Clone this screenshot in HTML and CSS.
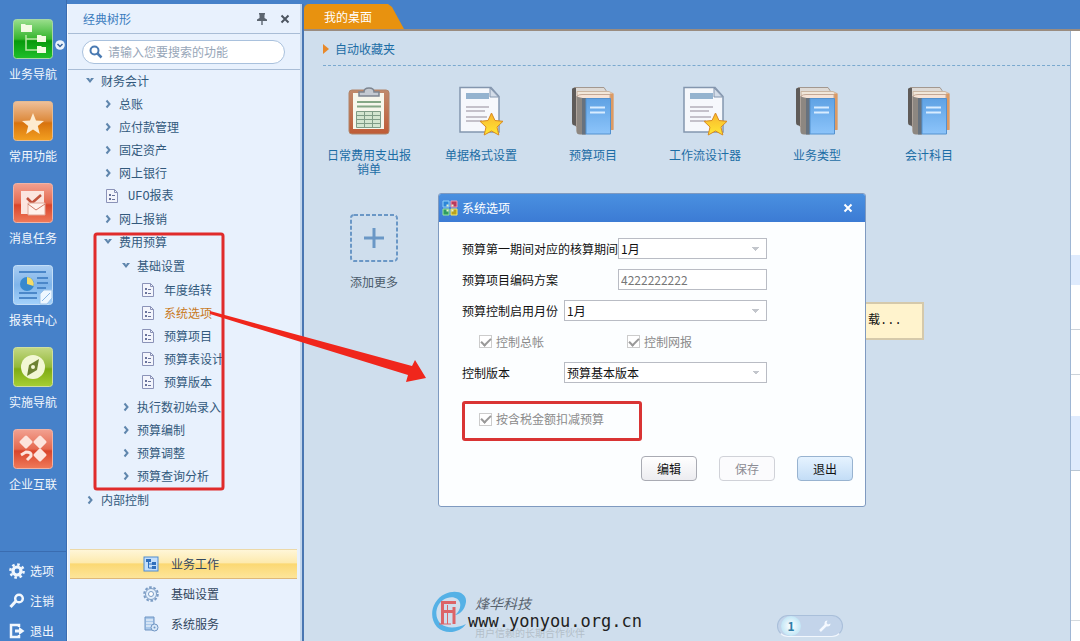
FILE: index.html
```html
<!DOCTYPE html>
<html lang="zh-CN">
<head>
    <meta charset="UTF-8">
    <meta name="viewport" content="width=device-width, initial-scale=1.0">
    <title>我的桌面</title>
    <link rel="stylesheet" href="styles.css">
</head>
<body>
<!-- Shared icons -->
<svg class="defs" aria-hidden="true">
    <defs>
        <linearGradient id="g-green" x1="0" y1="0" x2="0" y2="1"><stop offset="0" stop-color="#9ade8c"/><stop offset=".5" stop-color="#35b52d"/><stop offset=".55" stop-color="#089a0c"/><stop offset="1" stop-color="#1fc02a"/></linearGradient>
        <linearGradient id="g-orange" x1="0" y1="0" x2="0" y2="1"><stop offset="0" stop-color="#efc09a"/><stop offset=".5" stop-color="#dd8a3c"/><stop offset=".55" stop-color="#d8730e"/><stop offset="1" stop-color="#f3a020"/></linearGradient>
        <linearGradient id="g-red" x1="0" y1="0" x2="0" y2="1"><stop offset="0" stop-color="#f2a191"/><stop offset=".5" stop-color="#e5694f"/><stop offset=".55" stop-color="#d9452b"/><stop offset="1" stop-color="#f07a5a"/></linearGradient>
        <linearGradient id="g-blue" x1="0" y1="0" x2="0" y2="1"><stop offset="0" stop-color="#a9cdf2"/><stop offset=".5" stop-color="#7fb4ea"/><stop offset="1" stop-color="#a4d2fb"/></linearGradient>
        <linearGradient id="g-lime" x1="0" y1="0" x2="0" y2="1"><stop offset="0" stop-color="#c3d884"/><stop offset=".5" stop-color="#94b93a"/><stop offset=".55" stop-color="#7fab14"/><stop offset="1" stop-color="#a6cf34"/></linearGradient>
        <linearGradient id="g-book" x1="0" y1="0" x2="0" y2="1"><stop offset="0" stop-color="#5fa2e4"/><stop offset="1" stop-color="#8cc4fa"/></linearGradient>
        <linearGradient id="g-star" x1="0" y1="0" x2="0" y2="1"><stop offset="0" stop-color="#f9b52c"/><stop offset="1" stop-color="#ffe834"/></linearGradient>
        <linearGradient id="g-clip" x1="0" y1="0" x2="0" y2="1"><stop offset="0" stop-color="#c08a6c"/><stop offset="1" stop-color="#bf5b36"/></linearGradient>
    </defs>
    <symbol id="i-leaf" viewBox="0 0 12 14">
        <path d="M.5.5h8l3 3v10H.5z" fill="#f3f5fc" stroke="#8b93b8"/>
        <path d="M8.500.5v3h3" fill="none" stroke="#8b93b8"/>
        <path d="M3 5h2v2H3zM3 9h2v2H3z" fill="#6a749c"/>
        <path d="M6 6.500h3M6 10.500h3" stroke="#6a749c"/>
    </symbol>
    <symbol id="i-down" viewBox="0 0 10 10"><path d="M1 2h3l1 2 1-2h3L5 7z" fill="#5f86ad"/></symbol>
    <symbol id="i-right" viewBox="0 0 10 10"><path d="M3.500 1.500 6.500 5 3.500 8.500" fill="none" stroke="#5f86ad" stroke-width="2"/></symbol>
    <symbol id="i-gear" viewBox="0 0 16 16">
        <circle cx="8" cy="8" r="6.600" fill="none" stroke="currentColor" stroke-width="2.500" stroke-dasharray="2.600 2.580"/>
        <circle cx="8" cy="8" r="4" fill="none" stroke="currentColor" stroke-width="3.200"/>
    </symbol>
    <symbol id="i-books" viewBox="0 0 44 50">
        <path d="M3.500 1.500H33l2 3v36H5z" fill="#dedad6" stroke="#a39890"/>
        <path d="M1 3q1-2 4-1v38l-3-1q-1 0-1-3z" fill="#5f5b59"/>
        <path d="M6 5.500h32l4 2v36H8z" fill="#f1e7da" stroke="#cbb6a2"/>
        <path d="M39 7.500h3.500V44H39z" fill="#dd9a63"/>
        <path d="M6 10q2-1.500 5-1.500h28V47.500H9q-3 0-3-3z" fill="#f6e3d6" stroke="#c3a896"/>
        <path d="M5.500 10q3 2 9 2v36.500H9q-3.500 0-3.500-3z" fill="#8d8781"/>
        <path d="M11 12h4v36.500h-4z" fill="#67727e"/>
        <path d="M15 12.500h24.500v35.500H15z" fill="url(#g-book)" stroke="#5391cf"/>
        <path d="M19 21.500h15M19 26.500h15" stroke="#d8ecff" stroke-width="2"/>
    </symbol>
    <symbol id="i-doc" viewBox="0 0 44 50">
        <path d="M1 1.500h31l8 9V46H1z" fill="#f6f8fc" stroke="#8496ae" stroke-width="1.500"/>
        <path d="M31 2v9h8.500z" fill="#d4dde9" stroke="#8496ae"/>
        <path d="M7 7h23v6H7z" fill="#94b3cf"/>
        <path d="M7 21h23M7 25h19M7 31h21M7 35h16" stroke="#b4afb9" stroke-width="1.500"/>
        <path d="m32.500 27 3.500 7.500 8 .8-6 5.700 1.800 8-7.300-4-7.300 4 1.800-8-6-5.700 8-.8z" fill="url(#g-star)" stroke="#d88a22"/>
    </symbol>
</svg>

<div class="app">
    <!-- Left icon rail -->
    <aside class="rail">
        <nav class="rail-nav">
            <a href="#" class="rail-item">
                <svg width="40" height="40" viewBox="0 0 40 40">
                    <rect x=".5" y=".5" width="39" height="39" rx="3" fill="url(#g-green)" stroke="#a6d8a6"/>
                    <path d="M8 5h4l1 1h6v7H8z" fill="#f3fbe2"/>
                    <path d="M13 16v15h11M13 20h11" fill="none" stroke="#b8e6a4" stroke-width="1.500"/>
                    <path d="M24 16h4l1 1h4v6h-9zM24 27h4l1 1h4v6h-9z" fill="#f3fbe2"/>
                </svg>
                <span>业务导航</span>
                <svg class="rail-badge" width="10" height="10" viewBox="0 0 10 10">
                    <circle cx="5" cy="5" r="4.800" fill="#eaf3fd"/>
                    <path d="M2.500 4 5 6.500 7.500 4" fill="none" stroke="#35629c" stroke-width="1.500"/>
                </svg>
            </a>
            <a href="#" class="rail-item">
                <svg width="40" height="40" viewBox="0 0 40 40">
                    <rect x=".5" y=".5" width="39" height="39" rx="3" fill="url(#g-orange)" stroke="#e3bb93"/>
                    <path d="m20 12 3 7.500 8 .5-6.200 5 2 8L20 28.500 13.200 33l2-8L9 20l8-.5z" fill="#fdebcf"/>
                </svg>
                <span>常用功能</span>
            </a>
            <a href="#" class="rail-item">
                <svg width="40" height="40" viewBox="0 0 40 40">
                    <rect x=".5" y=".5" width="39" height="39" rx="3" fill="url(#g-red)" stroke="#f0b3a5"/>
                    <path d="M8 8h23v23H8z" fill="#fbe5df"/>
                    <path d="m14 15 5 5 9-8" fill="none" stroke="#c2533c" stroke-width="2.500"/>
                    <path d="M15 20h17v12H15z" fill="#fff2ec" stroke="#e0a898"/>
                    <path d="m15 21 8 6 9-6" fill="none" stroke="#cf7a66"/>
                </svg>
                <span>消息任务</span>
            </a>
            <a href="#" class="rail-item">
                <svg width="40" height="40" viewBox="0 0 40 40">
                    <rect x=".5" y=".5" width="39" height="39" rx="3" fill="url(#g-blue)" stroke="#c3def7"/>
                    <path d="M6 7h27M24 13h11M24 18h11M24 23h9M6 28h18M6 33h18" stroke="#4b87c9" stroke-width="2"/>
                    <circle cx="14" cy="19" r="7" fill="#3789ce"/>
                    <path d="M14 19v-7a7 7 0 0 1 6.500 9z" fill="#f4dc68"/>
                    <path d="M27 39V29l4-4h8v8l-5 6z" fill="#eef7ff" stroke="#9cc3ea"/>
                    <path d="m29 36 8-8" stroke="#8ab7e4"/>
                </svg>
                <span>报表中心</span>
            </a>
            <a href="#" class="rail-item">
                <svg width="40" height="40" viewBox="0 0 40 40">
                    <rect x=".5" y=".5" width="39" height="39" rx="3" fill="url(#g-lime)" stroke="#cfdf9f"/>
                    <circle cx="20" cy="20" r="12" fill="#f2f7d4"/>
                    <path d="m26 12-2 11-10 6 2-11z" fill="#6d8232"/>
                    <circle cx="20" cy="20" r="2" fill="#f2f7d4"/>
                </svg>
                <span>实施导航</span>
            </a>
            <a href="#" class="rail-item">
                <svg width="40" height="40" viewBox="0 0 40 40">
                    <rect x=".5" y=".5" width="39" height="39" rx="3" fill="url(#g-red)" stroke="#f0b3a5"/>
                    <path d="m13 8 5 5-5 5-5-5zM27 8l5 5-5 5-5-5zM27 21l5 5-5 5-5-5z" fill="#fde4dc" stroke="#fde4dc" stroke-width="3" stroke-linejoin="round"/>
                    <path d="m8 26 5-3q6 0 5 4l-4 4" fill="none" stroke="#fde4dc" stroke-width="3"/>
                </svg>
                <span>企业互联</span>
            </a>
        </nav>
        <nav class="rail-foot">
            <a href="#"><svg width="16" height="16"><use href="#i-gear"/></svg>选项</a>
            <a href="#">
                <svg width="16" height="16" viewBox="0 0 16 16"><circle cx="10" cy="5.500" r="3.800" fill="none" stroke="currentColor" stroke-width="2.500"/><path d="m7 8-5.500 6" stroke="currentColor" stroke-width="3"/></svg>注销
            </a>
            <a href="#">
                <svg width="16" height="16" viewBox="0 0 16 16"><path d="M10 4V2H2v12h8v-2" fill="none" stroke="currentColor" stroke-width="2.500"/><path d="M6 6.500h4V4l5.500 4-5.500 4V9.500H6z" fill="currentColor"/></svg>退出
            </a>
        </nav>
    </aside>

    <!-- Function tree -->
    <section class="side">
        <header class="side-head">
            <h2>经典树形</h2>
            <button type="button" aria-label="固定">
                <svg width="12" height="12" viewBox="0 0 12 12"><path d="M3 0h6v1.500H8.500V5L11 6.500V8H1V6.500L3.500 5V1.500H3zM5.300 8h1.400v4H5.300z" fill="#5c6570"/></svg>
            </button>
            <button type="button" aria-label="关闭">
                <svg width="10" height="10" viewBox="0 0 10 10"><path d="m1.500 1.500 7 7m0-7-7 7" stroke="#4c5560" stroke-width="2"/></svg>
            </button>
        </header>
        <div class="search">
            <label class="search-box">
                <svg width="14" height="14" viewBox="0 0 14 14"><circle cx="5.500" cy="5.500" r="4" fill="none" stroke="#4a7ab2" stroke-width="2"/><path d="m8.500 8.500 4 4" stroke="#4a7ab2" stroke-width="2.500"/></svg>
                <input type="text" placeholder="请输入您要搜索的功能" aria-label="搜索功能">
            </label>
        </div>
        <ul class="tree">
            <li>
                <a href="#" class="root"><svg><use href="#i-down"/></svg>财务会计</a>
                <ul>
                    <li><a href="#"><svg><use href="#i-right"/></svg>总账</a></li>
                    <li><a href="#"><svg><use href="#i-right"/></svg>应付款管理</a></li>
                    <li><a href="#"><svg><use href="#i-right"/></svg>固定资产</a></li>
                    <li><a href="#"><svg><use href="#i-right"/></svg>网上银行</a></li>
                    <li><a href="#" class="leaf"><svg><use href="#i-leaf"/></svg><span><span class="latin">UFO</span>报表</span></a></li>
                    <li><a href="#"><svg><use href="#i-right"/></svg>网上报销</a></li>
                    <li>
                        <a href="#"><svg><use href="#i-down"/></svg>费用预算</a>
                        <ul class="sub">
                            <li>
                                <a href="#"><svg><use href="#i-down"/></svg>基础设置</a>
                                <ul class="sub">
                                    <li><a href="#" class="leaf"><svg><use href="#i-leaf"/></svg>年度结转</a></li>
                                    <li><a href="#" class="leaf current"><svg><use href="#i-leaf"/></svg>系统选项</a></li>
                                    <li><a href="#" class="leaf"><svg><use href="#i-leaf"/></svg>预算项目</a></li>
                                    <li><a href="#" class="leaf"><svg><use href="#i-leaf"/></svg>预算表设计</a></li>
                                    <li><a href="#" class="leaf"><svg><use href="#i-leaf"/></svg>预算版本</a></li>
                                </ul>
                            </li>
                            <li><a href="#"><svg><use href="#i-right"/></svg>执行数初始录入</a></li>
                            <li><a href="#"><svg><use href="#i-right"/></svg>预算编制</a></li>
                            <li><a href="#"><svg><use href="#i-right"/></svg>预算调整</a></li>
                            <li><a href="#"><svg><use href="#i-right"/></svg>预算查询分析</a></li>
                        </ul>
                    </li>
                </ul>
            </li>
            <li><a href="#" class="root"><svg><use href="#i-right"/></svg>内部控制</a></li>
        </ul>
        <nav class="side-tabs">
            <a href="#" class="active">
                <svg width="16" height="16" viewBox="0 0 16 16"><rect x="1" y="1" width="14" height="14" fill="#c5dffa" stroke="#4e8bd0"/><path d="M3 3h5v3H3zM9 6h4v3H9zM9 10h4v3H9z" fill="#2f6fbd"/><path d="M5.500 6v6H9M5.500 8H9" fill="none" stroke="#2f6fbd"/></svg>业务工作
            </a>
            <a href="#">
                <svg width="16" height="16" viewBox="0 0 16 16"><circle cx="8" cy="8" r="6.800" fill="none" stroke="#7b9cc4" stroke-width="2" stroke-dasharray="2.600 1.680"/><circle cx="8" cy="8" r="5.500" fill="#e3effc" stroke="#7b9cc4"/><circle cx="8" cy="8" r="2.500" fill="#fff" stroke="#7b9cc4"/></svg>基础设置
            </a>
            <a href="#">
                <svg width="16" height="16" viewBox="0 0 16 16"><path d="M2 1h9v13H2z" fill="#a9c8ea" stroke="#6e94c2"/><path d="M3 4h7M3 7h7M3 10h5" stroke="#fff"/><circle cx="11.500" cy="11.500" r="3.500" fill="#d8e8f8" stroke="#6e94c2"/><circle cx="11.500" cy="11.500" r="1" fill="#6e94c2"/></svg>系统服务
            </a>
        </nav>
    </section>
    <div class="splitter"></div>

    <!-- Desktop -->
    <div class="work">
        <div class="tabbar"><a href="#" class="tab">我的桌面</a></div>
        <div class="work-body">
            <main class="desktop">
                <h1>自动收藏夹</h1>
                <div class="shortcuts">
                    <a href="#" class="shortcut">
                        <svg width="44" height="50" viewBox="0 0 44 50">
                            <rect x="2" y="4" width="40" height="44" rx="3" fill="url(#g-clip)" stroke="#b08468"/>
                            <path d="M6 7h31v36H6z" fill="#f7f7ec"/>
                            <path d="M12 10V6h5q0-4 5-4t5 4h5v4z" fill="#c4cad2" stroke="#7d8590" stroke-width="1.500"/>
                            <path d="M10 16h24M10 20.500h24" stroke="#86a886" stroke-width="2"/>
                            <path d="M9.500 25.500h24v16h-24z" fill="#d3e5cf" stroke="#7f9c86"/>
                            <path d="M9 29.500h25M9 33.500h25M9 37.500h25M17.500 25v17M25.500 25v17" stroke="#7f9c86"/>
                        </svg>
                        <span>日常费用支出报销单</span>
                    </a>
                    <a href="#" class="shortcut"><svg width="44" height="50"><use href="#i-doc"/></svg><span>单据格式设置</span></a>
                    <a href="#" class="shortcut"><svg width="44" height="50"><use href="#i-books"/></svg><span>预算项目</span></a>
                    <a href="#" class="shortcut"><svg width="44" height="50"><use href="#i-doc"/></svg><span>工作流设计器</span></a>
                    <a href="#" class="shortcut"><svg width="44" height="50"><use href="#i-books"/></svg><span>业务类型</span></a>
                    <a href="#" class="shortcut"><svg width="44" height="50"><use href="#i-books"/></svg><span>会计科目</span></a>
                    <a href="#" class="shortcut add">
                        <svg width="50" height="50" viewBox="0 0 50 50">
                            <rect x="2" y="2" width="46" height="46" rx="3" fill="none" stroke="#6a97c6" stroke-width="2" stroke-dasharray="4 2"/>
                            <path d="M25 15v20M15 25h20" stroke="#6a97c6" stroke-width="3"/>
                        </svg>
                        <span>添加更多</span>
                    </a>
                </div>
            </main>
            <div class="edge">
                <i class="e-top"></i><i class="e-sel"></i><i class="e-row"></i><i class="e-row"></i><i class="e-gap"></i><i class="e-block"></i><i class="e-rest"></i>
            </div>
        </div>

        <div class="toast">载...</div>

        <section class="dialog" role="dialog" aria-labelledby="dlg-title">
            <header class="dialog-head">
                <svg width="16" height="16" viewBox="0 0 16 16">
                    <path d="M1 1h6v6H1z" fill="#2c86d8" stroke="#8fd0f8"/><path d="M9 1h6v6H9z" fill="#b93a5c" stroke="#f29ab0"/>
                    <path d="M1 9h6v6H1z" fill="#2f9b62" stroke="#9be79a"/><path d="M9 9h6v6H9z" fill="#b9a21f" stroke="#f7ec6a"/>
                    <path d="M4.500 4.500h2v2h-2zM9.500 4.500h2v2h-2zM4.500 9.500h2v2h-2zM9.500 9.500h2v2h-2z" fill="#e6f3d0"/>
                </svg>
                <h2 id="dlg-title">系统选项</h2>
                <button type="button" aria-label="关闭">
                    <svg width="10" height="10" viewBox="0 0 10 10"><path d="m1.500 1.500 7 7m0-7-7 7" stroke="#fff" stroke-width="2"/></svg>
                </button>
            </header>
            <form class="options">
                <div class="field">
                    <label for="period">预算第一期间对应的核算期间</label>
                    <select id="period"><option>1月</option></select>
                </div>
                <div class="field">
                    <label for="code">预算项目编码方案</label>
                    <input type="text" id="code" value="4222222222" readonly>
                </div>
                <div class="field wide">
                    <label for="month">预算控制启用月份</label>
                    <select id="month"><option>1月</option></select>
                </div>
                <div class="checks">
                    <label><input type="checkbox" checked disabled>控制总帐</label>
                    <label><input type="checkbox" checked disabled>控制网报</label>
                </div>
                <div class="field wide">
                    <label for="version">控制版本</label>
                    <select id="version"><option>预算基本版本</option></select>
                </div>
                <div class="checks marked">
                    <label><input type="checkbox" checked disabled>按含税金额扣减预算</label>
                </div>
            </form>
            <footer class="dialog-foot">
                <button type="button">编辑</button>
                <button type="button" disabled>保存</button>
                <button type="button" class="primary">退出</button>
            </footer>
        </section>

        <div class="brand">
            <svg width="38" height="42" viewBox="0 0 38 42">
                <path d="M36 33C30 42 15 44 7 36-2 26 2 9 15 3c11-5 22-1 21 8-1 8-7 13-11 13 4-3 6-8 5-12C29 6 20 4 13 9 5 15 4 27 11 33c6 5 17 4 25 0z" fill="#55b1e6"/>
                <path d="M12.500 33V11.500H26M12.500 20.500H24M24 33V16" fill="none" stroke="#dc6468" stroke-width="3"/>
                <path d="M17.500 14v19M9 33h12" fill="none" stroke="#dc6468" stroke-width="1"/>
            </svg>
            <div class="brand-text">
                <span class="brand-name">烽华科技</span>
                <span class="brand-slogan">用户信赖的长期合作伙伴</span>
                <span class="brand-url">www.yonyou.org.cn</span>
            </div>
        </div>

        <div class="pager">
            <button type="button" class="page">1</button>
            <button type="button" aria-label="设置">
                <svg width="14" height="14" viewBox="0 0 14 14"><path d="m2 12 6-6" stroke="#f5f9ff" stroke-width="2.500"/><path d="M12.500 4.500A3 3 0 1 1 9.500 1.500L8.500 4 10 5.500z" fill="#f5f9ff"/></svg>
            </button>
        </div>
    </div>
</div>

<!-- Guide marks -->
<svg class="guide" width="350" height="270" viewBox="0 0 350 270" aria-hidden="true">
    <rect x="2" y="2" width="128" height="255" rx="2" fill="none" stroke="#e02b2b" stroke-width="3"/>
    <path d="m117 79 202 55 3-6 11 18-20 4 2-7L117 82z" fill="#f0261c"/>
</svg>
</body>
</html>
```
FILE: styles.css
```css
* {
    box-sizing: border-box;
}

body {
    margin: 0;
    font-family: "Noto Sans CJK SC", "Liberation Sans", sans-serif;
    font-size: 12px;
    line-height: 14px;
    color: #111;
    background: #4681c9;
}

a {
    color: inherit;
    text-decoration: none;
}

ul {
    list-style: none;
    margin: 0;
    padding: 0;
}

h1,
h2 {
    margin: 0;
    font-size: 12px;
    font-weight: normal;
}

button,
input,
select {
    font: inherit;
    color: inherit;
}

button {
    padding: 0;
    border: none;
    background: none;
    cursor: pointer;
}

svg {
    display: block;
    flex: none;
}

.defs {
    position: absolute;
    width: 0;
    height: 0;
}

.app {
    display: flex;
    height: 100vh;
    overflow: hidden;
}

/* Icon rail */
.rail {
    width: 67px;
    flex: none;
    padding-top: 19px;
    color: #f2f7fd;
    border-right: 1px solid #3a6cb0;
}

.rail-item {
    position: relative;
    display: flex;
    flex-direction: column;
    align-items: center;
    gap: 8px;
    height: 82px;
}

.rail-badge {
    position: absolute;
    top: 21px;
    right: 1px;
}

.rail-foot {
    margin-top: 40px;
    padding-top: 4px;
    border-top: 1px solid #3a6cb0;
}

.rail-foot a {
    display: flex;
    align-items: center;
    gap: 5px;
    height: 30px;
    padding-left: 9px;
}

/* Tree panel */
.side {
    display: flex;
    flex-direction: column;
    width: 233px;
    flex: none;
    margin-top: 4px;
    background: #e8f1fd;
    border-left: 1px solid #f6faff;
}

.side-head {
    display: flex;
    align-items: center;
    gap: 12px;
    height: 30px;
    padding: 0 10px 0 15px;
    border-bottom: 1px solid #a9bdd6;
}

.side-head h2 {
    flex: 1;
    color: #3b7cbd;
}

.search {
    padding: 6px 15px 5px 14px;
    border-bottom: 1px solid #a9bdd6;
}

.search-box {
    display: flex;
    align-items: center;
    gap: 5px;
    height: 24px;
    padding: 0 6px;
    background: #fff;
    border: 1px solid #a9c1dd;
    border-radius: 12px;
}

.search-box input {
    flex: 1;
    min-width: 0;
    padding: 0;
    border: none;
    outline: none;
    background: none;
}

.search-box input::placeholder {
    color: #97a6b8;
}

.tree {
    flex: 1;
    padding-left: 17px;
    color: #32597c;
}

.tree ul {
    padding-left: 18px;
}

.tree ul.sub {
    padding-top: 1px;
    padding-bottom: 2px;
}

.tree a {
    display: flex;
    align-items: center;
    gap: 6px;
    height: 23px;
    white-space: nowrap;
}

.tree a.root {
    height: 22px;
}

.tree svg {
    width: 10px;
    height: 10px;
}

.tree a.leaf {
    gap: 10px;
    padding-left: 3px;
}

.tree .leaf svg {
    width: 12px;
    height: 14px;
}

.tree .current {
    color: #c87a1e;
}

.latin {
    font-family: "Liberation Mono", monospace;
}

.side-tabs {
    padding: 0 3px 2px 2px;
    color: #32475f;
}

.side-tabs a {
    display: flex;
    align-items: center;
    gap: 12px;
    height: 30px;
    padding-left: 73px;
}

.side-tabs .active {
    background: linear-gradient(#fff6d8, #fdeaae 45%, #fbd873 50%, #fde59a);
    border-top: 1px solid #ecd9a8;
    border-bottom: 1px solid #dfb878;
}

.splitter {
    width: 4px;
    flex: none;
    margin-top: 4px;
    background: #c3d6ec;
    border-right: 2px solid #4a76b2;
}

/* Work area */
.work {
    position: relative;
    display: flex;
    flex-direction: column;
    flex: 1;
    min-width: 0;
    padding-top: 4px;
}

.tabbar {
    border-bottom: 2px solid #9a8c80;
}

.tab {
    display: block;
    width: 100px;
    height: 25px;
    padding-left: 20px;
    line-height: 25px;
    color: #fff;
    background: #e8920f;
    border-radius: 5px 0 0 0;
    clip-path: polygon(0 0, 84% 0, 88% 12%, 100% 100%, 0 100%);
}

.work-body {
    display: flex;
    flex: 1;
}

.desktop {
    flex: 1;
    background: #cfdeed;
}

.desktop h1 {
    display: flex;
    align-items: center;
    gap: 6px;
    height: 35px;
    margin-left: 19px;
    padding-top: 2px;
    color: #1c6da5;
    border-bottom: 1px dashed #7aa9cf;
}

.desktop h1::before {
    content: "";
    border: 5px solid transparent;
    border-left: 6px solid #e8892a;
    border-right: none;
}

.shortcuts {
    display: grid;
    grid-template-columns: repeat(auto-fill, 112px);
    row-gap: 37px;
    padding: 20px 0 0 9px;
}

.shortcut {
    display: flex;
    flex-direction: column;
    align-items: center;
    gap: 12px;
    padding: 0 14px;
    text-align: center;
    color: #1c6da5;
}

.shortcut.add {
    padding: 0 9px 0 19px;
    color: #4a5a6a;
}

/* Window that shows behind the desktop on the right */
.edge {
    display: flex;
    flex-direction: column;
    width: 10px;
    background: #fff;
    border-left: 1px solid #9fb6d4;
}

.e-top {
    height: 224px;
}

.e-sel {
    height: 30px;
    background: #dfebfd;
}

.e-row {
    height: 45px;
    border-bottom: 1px solid #ccd3da;
}

.e-gap {
    height: 41px;
}

.e-block {
    height: 55px;
    background: #dfebfd;
    border-bottom: 1px solid #b9c6d3;
}

.e-rest {
    height: 150px;
    border-bottom: 1px solid #d5dade;
}

.toast {
    position: absolute;
    top: 302px;
    left: 536px;
    width: 84px;
    padding: 10px 0 10px 26px;
    font-family: "Liberation Mono", "Noto Sans CJK SC", monospace;
    background: #fff3cd;
    border: 2px solid #d5c9ab;
}

/* Options dialog */
.dialog {
    position: absolute;
    top: 193px;
    left: 134px;
    width: 428px;
    padding-bottom: 25px;
    background: #fcfeff;
    border: 1px solid #7f9ac0;
    border-radius: 3px;
    overflow: hidden;
}

.dialog-head {
    display: flex;
    align-items: center;
    gap: 4px;
    height: 28px;
    padding: 0 12px 0 3px;
    color: #fff;
    background: linear-gradient(#4a90e0, #3c7bd4);
}

.dialog-head h2 {
    flex: 1;
}

.options {
    display: flex;
    flex-direction: column;
    gap: 10px;
    width: 328px;
    padding: 16px 0 0 23px;
}

.field {
    display: flex;
    align-items: center;
    justify-content: space-between;
    white-space: nowrap;
}

.field select,
.field input {
    width: 149px;
    height: 21px;
    padding: 0 2px;
    line-height: 18px;
    background: #fff;
    border: 1px solid #b9bcc4;
    border-radius: 0;
    outline: none;
}

.field.wide select {
    width: 203px;
}

.field input {
    color: #777;
}

.field select {
    appearance: none;
    background-image: conic-gradient(from -45deg at 50% 100%, #c3c6cc 90deg, transparent 0);
    background-image: linear-gradient(to bottom left, #c3c6cc 50%, transparent 50%), linear-gradient(to bottom right, #c3c6cc 50%, transparent 50%);
    background-size: 4px 4px;
    background-position: right 10px center, right 6px center;
    background-repeat: no-repeat;
}

.checks {
    display: flex;
    height: 21px;
    padding-left: 17px;
    color: #8b8b8b;
}

.checks label {
    display: flex;
    align-items: center;
    gap: 4px;
    width: 148px;
    flex: none;
    white-space: nowrap;
}

.checks input {
    appearance: none;
    display: grid;
    place-items: center;
    width: 13px;
    height: 13px;
    margin: 0;
    background: #fff;
    border: 1px solid #ccc;
}

.checks input:checked::after {
    content: "";
    width: 8px;
    height: 4px;
    margin-bottom: 2px;
    border: solid #999;
    border-width: 0 0 2px 2px;
    transform: rotate(-45deg);
}

.checks.marked {
    width: 180px;
    height: 40px;
    margin-top: 8px;
    padding: 0 0 4px 14px;
    border: 3px solid #d93434;
    border-radius: 3px;
}

.dialog-foot {
    display: flex;
    justify-content: flex-end;
    gap: 22px;
    padding: 15px 12px 0;
}

.dialog-foot button {
    width: 56px;
    height: 25px;
    background: linear-gradient(#fff, #ececf0);
    border: 1px solid #a9abb3;
    border-radius: 4px;
}

.dialog-foot button:disabled {
    color: #8c8c94;
    background: #fbfbfd;
    border-color: #d0d2d8;
}

.dialog-foot .primary {
    background: linear-gradient(#e6f3ff, #c3ddf6);
    border-color: #98b3d0;
}

/* Brand mark */
.brand {
    position: absolute;
    left: 126px;
    bottom: 8px;
    display: flex;
}

.brand-text {
    position: relative;
    padding: 5px 0 0 7px;
}

.brand-name {
    font-style: italic;
    font-size: 14px;
    color: #59636e;
}

.brand-url,
.brand-slogan {
    position: absolute;
    left: 0;
    top: 20px;
    font-family: "DejaVu Sans Mono", monospace;
    font-size: 17px;
    line-height: 20px;
    color: #222;
    white-space: nowrap;
}

.brand-slogan {
    left: 7px;
    top: 32px;
    font-family: "Noto Sans CJK SC", sans-serif;
    font-size: 10px;
    color: #b3bec9;
}

.pager {
    position: absolute;
    left: 473px;
    bottom: 4px;
    display: flex;
    align-items: center;
    gap: 17px;
    width: 66px;
    height: 22px;
    padding: 0 3px;
    background: #c3d4ea;
    border: 1px solid #a9bfda;
    border-bottom-color: #f2f7fd;
    border-radius: 11px;
}

.pager .page {
    width: 20px;
    height: 20px;
    font-weight: bold;
    color: #2f7ea8;
    background: radial-gradient(#fff, #a9dcf2);
    border-radius: 50%;
}

/* Red highlight and arrow laid over the whole window */
.guide {
    position: absolute;
    top: 232px;
    left: 93px;
    pointer-events: none;
}
```
